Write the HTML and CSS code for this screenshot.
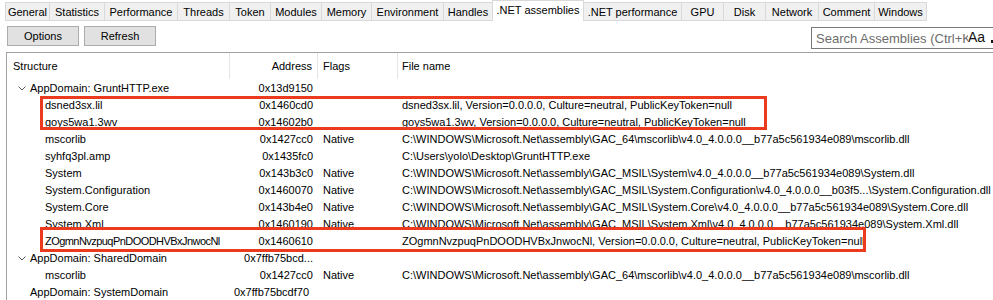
FILE: index.html
```html
<!DOCTYPE html>
<html>
<head>
<meta charset="utf-8">
<link rel="stylesheet" href="styles.css">
</head>
<body>
<div class="tabs">
  <div class="tab">General</div>
  <div class="tab">Statistics</div>
  <div class="tab">Performance</div>
  <div class="tab">Threads</div>
  <div class="tab">Token</div>
  <div class="tab">Modules</div>
  <div class="tab">Memory</div>
  <div class="tab">Environment</div>
  <div class="tab">Handles</div>
  <div class="tab active">.NET assemblies</div>
  <div class="tab">.NET performance</div>
  <div class="tab">GPU</div>
  <div class="tab">Disk</div>
  <div class="tab">Network</div>
  <div class="tab">Comment</div>
  <div class="tab last">Windows</div>
</div>
<div class="toolbar">
  <div class="btn">Options</div>
  <div class="btn">Refresh</div>
  <div class="search">
    <span class="placeholder">Search Assemblies (Ctrl+K)</span>
    <span class="aa">Aa</span>
    <span class="dot"></span>
  </div>
</div>
<div class="panel">
  <div class="row head">
    <div class="c c1">Structure</div>
    <div class="c c2">Address</div>
    <div class="c c3">Flags</div>
    <div class="c c4">File name</div>
  </div>
  <div class="row">
    <div class="c c1 lvl0"><svg class="chev" width="8" height="5" viewBox="0 0 8 5"><polyline points="0.5,0.5 4,4 7.5,0.5" fill="none" stroke="#5a5a5a" stroke-width="1"/></svg>AppDomain: GruntHTTP.exe</div>
    <div class="c c2">0x13d9150</div><div class="c c3"></div><div class="c c4"></div>
  </div>
  <div class="row">
    <div class="c c1 lvl1">dsned3sx.lil</div>
    <div class="c c2">0x1460cd0</div><div class="c c3"></div><div class="c c4">dsned3sx.lil, Version=0.0.0.0, Culture=neutral, PublicKeyToken=null</div>
  </div>
  <div class="row">
    <div class="c c1 lvl1">goys5wa1.3wv</div>
    <div class="c c2">0x14602b0</div><div class="c c3"></div><div class="c c4">goys5wa1.3wv, Version=0.0.0.0, Culture=neutral, PublicKeyToken=null</div>
  </div>
  <div class="row">
    <div class="c c1 lvl1">mscorlib</div>
    <div class="c c2">0x1427cc0</div><div class="c c3">Native</div><div class="c c4">C:\WINDOWS\Microsoft.Net\assembly\GAC_64\mscorlib\v4.0_4.0.0.0__b77a5c561934e089\mscorlib.dll</div>
  </div>
  <div class="row">
    <div class="c c1 lvl1">syhfq3pl.amp</div>
    <div class="c c2">0x1435fc0</div><div class="c c3"></div><div class="c c4">C:\Users\yolo\Desktop\GruntHTTP.exe</div>
  </div>
  <div class="row">
    <div class="c c1 lvl1">System</div>
    <div class="c c2">0x143b3c0</div><div class="c c3">Native</div><div class="c c4">C:\WINDOWS\Microsoft.Net\assembly\GAC_MSIL\System\v4.0_4.0.0.0__b77a5c561934e089\System.dll</div>
  </div>
  <div class="row">
    <div class="c c1 lvl1">System.Configuration</div>
    <div class="c c2">0x1460070</div><div class="c c3">Native</div><div class="c c4">C:\WINDOWS\Microsoft.Net\assembly\GAC_MSIL\System.Configuration\v4.0_4.0.0.0__b03f5...\System.Configuration.dll</div>
  </div>
  <div class="row">
    <div class="c c1 lvl1">System.Core</div>
    <div class="c c2">0x143b4e0</div><div class="c c3">Native</div><div class="c c4">C:\WINDOWS\Microsoft.Net\assembly\GAC_MSIL\System.Core\v4.0_4.0.0.0__b77a5c561934e089\System.Core.dll</div>
  </div>
  <div class="row">
    <div class="c c1 lvl1">System.Xml</div>
    <div class="c c2">0x1460190</div><div class="c c3">Native</div><div class="c c4">C:\WINDOWS\Microsoft.Net\assembly\GAC_MSIL\System.Xml\v4.0_4.0.0.0__b77a5c561934e089\System.Xml.dll</div>
  </div>
  <div class="row">
    <div class="c c1 lvl1 tight">ZOgmnNvzpuqPnDOODHVBxJnwocNl</div>
    <div class="c c2">0x1460610</div><div class="c c3"></div><div class="c c4">ZOgmnNvzpuqPnDOODHVBxJnwocNl, Version=0.0.0.0, Culture=neutral, PublicKeyToken=null</div>
  </div>
  <div class="row">
    <div class="c c1 lvl0"><svg class="chev" width="8" height="5" viewBox="0 0 8 5"><polyline points="0.5,0.5 4,4 7.5,0.5" fill="none" stroke="#5a5a5a" stroke-width="1"/></svg>AppDomain: SharedDomain</div>
    <div class="c c2">0x7ffb75bcd...</div><div class="c c3"></div><div class="c c4"></div>
  </div>
  <div class="row">
    <div class="c c1 lvl1">mscorlib</div>
    <div class="c c2">0x1427cc0</div><div class="c c3">Native</div><div class="c c4">C:\WINDOWS\Microsoft.Net\assembly\GAC_64\mscorlib\v4.0_4.0.0.0__b77a5c561934e089\mscorlib.dll</div>
  </div>
  <div class="row">
    <div class="c c1 lvl0">AppDomain: SystemDomain</div>
    <div class="c c2 left">0x7ffb75bcdf70</div><div class="c c3"></div><div class="c c4"></div>
  </div>
  <div class="mark mark1"></div>
  <div class="mark mark2"></div>
</div>
</body>
</html>
```

FILE: styles.css
```css
html, body {
  margin: 0;
  padding: 0;
  background: #ffffff;
  width: 993px;
  height: 300px;
  overflow: hidden;
  font-family: "Liberation Sans", Arial, sans-serif;
  font-size: 11px;
  color: #000;
}

.tabs {
  display: grid;
  grid-template-columns: 44px 55px 73px 52px 41px 51px 50px 72px 49px 92px 97px 42px 42px 53px 56px 53px;
  margin-left: 5px;
  height: 21px;
  width: max-content;
}

.tab {
  box-sizing: border-box;
  margin-top: 2px;
  height: 19px;
  background: #f0f0f0;
  border-top: 1px solid #d9d9d9;
  border-left: 1px solid #d9d9d9;
  border-bottom: 1px solid #d9d9d9;
  display: flex;
  align-items: center;
  justify-content: center;
  white-space: nowrap;
  font-size: 11px;
  color: #000;
}

.tab.last {
  border-right: 1px solid #d9d9d9;
}

.tab.active {
  margin-top: 0;
  height: 21px;
  background: #ffffff;
  border-bottom: none;
  border-right: 1px solid #d9d9d9;
  padding-bottom: 2px;
}

.tab.active + .tab {
  border-left: none;
}

.toolbar {
  display: flex;
  align-items: flex-start;
  height: 31px;
  padding-top: 5px;
  box-sizing: border-box;
}

.btn {
  box-sizing: border-box;
  width: 72px;
  height: 20px;
  margin-left: 7px;
  margin-right: -2px;
  background: #e1e1e1;
  border: 1px solid #adadad;
  display: flex;
  align-items: center;
  justify-content: center;
  font-size: 11px;
}

.btn + .btn {
  margin-left: 7px;
}

.search {
  margin-left: auto;
  margin-top: 1px;
  box-sizing: border-box;
  width: 190px;
  flex: none;
  height: 22px;
  border: 1px solid #7a7a7a;
  display: flex;
  align-items: center;
  margin-right: -8px;
}

.placeholder {
  width: 156px;
  padding-left: 4px;
  overflow: hidden;
  white-space: nowrap;
  color: #6d6d6d;
  font-size: 13px;
  flex: none;
  box-sizing: border-box;
}

.aa {
  font-size: 14px;
  color: #111;
  margin-left: 0;
  margin-top: -3px;
}

.dot {
  width: 3px;
  height: 3px;
  background: #111;
  margin-left: 6px;
  margin-top: 6px;
}

.panel {
  position: relative;
  margin-left: 6px;
  border-left: 1px solid #a0a0a0;
  border-top: 1px solid #a0a0a0;
  height: 260px;
}

.row {
  display: grid;
  grid-template-columns: 223px 88px 80px 1fr;
  height: 17px;
  align-items: center;
}

.row.head {
  height: 26px;
  align-items: stretch;
}

.c {
  box-sizing: border-box;
  white-space: nowrap;
  overflow: hidden;
  display: flex;
  align-items: center;
  height: 100%;
}

.head .c {
  border-right: 1px solid #e5e5e5;
}

.head .c4 {
  border-right: none;
}

.c1 {
  padding-left: 6px;
}

.c2 {
  justify-content: flex-end;
  padding-right: 5px;
}

.c2.left {
  justify-content: flex-start;
  padding-left: 4px;
  padding-right: 0;
  overflow: visible;
}

.c3 {
  padding-left: 5px;
}

.c4 {
  padding-left: 4px;
}

.lvl0 {
  padding-left: 23px;
  position: relative;
}

.lvl1 {
  padding-left: 38px;
}

.tight {
  letter-spacing: -0.55px;
}

.chev {
  position: absolute;
  left: 11px;
  top: 7px;
}

.mark {
  position: absolute;
  box-sizing: border-box;
  border: 3px solid #ec3a1e;
}

.mark1 {
  left: 33px;
  top: 43px;
  width: 727px;
  height: 34px;
}

.mark2 {
  left: 33px;
  top: 174px;
  width: 826px;
  height: 25px;
}
```
